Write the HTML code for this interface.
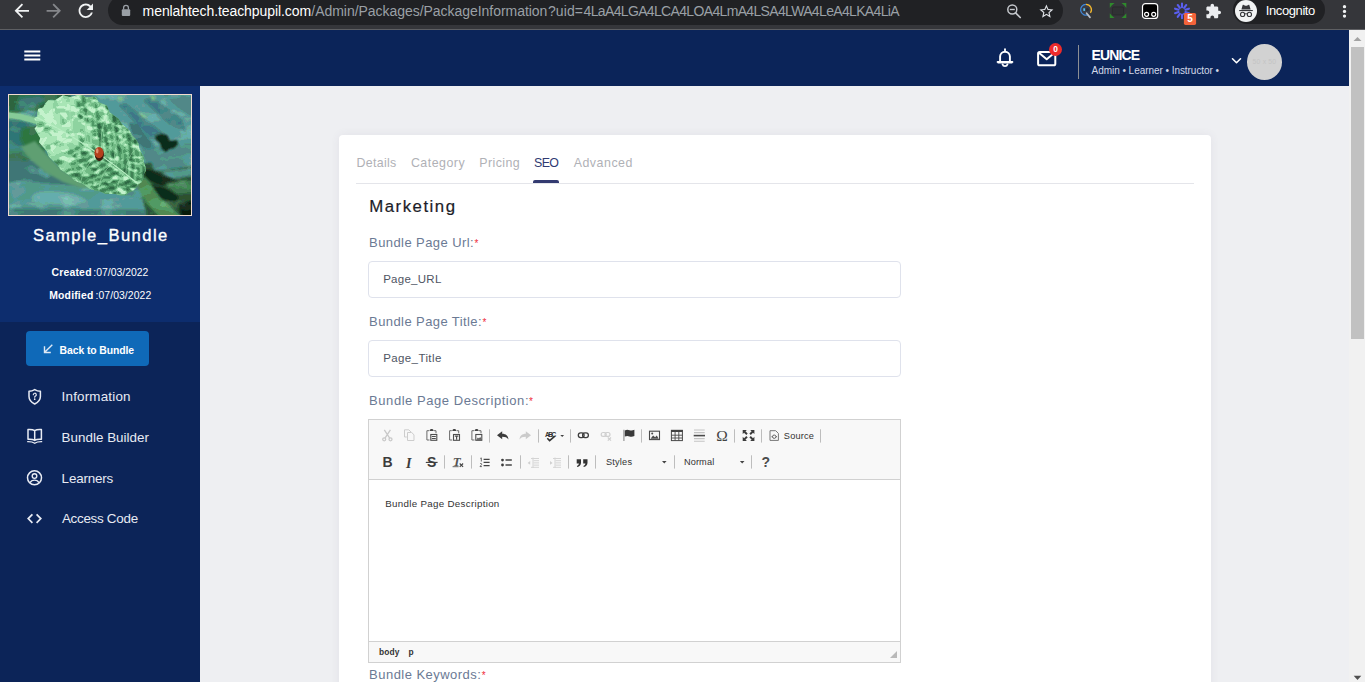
<!DOCTYPE html>
<html lang="en">
<head>
<meta charset="utf-8">
<title>Package Information - Sample_Bundle</title>
<style>
*{box-sizing:border-box;margin:0;padding:0}
html,body{width:1365px;height:682px;overflow:hidden;background:#eeeff2;font-family:"Liberation Sans",sans-serif}
body{position:relative}
.t{position:absolute;white-space:pre}
.a{position:absolute}
svg{position:absolute;overflow:visible}
#chrome{position:absolute;left:0;top:0;width:1365px;height:30px;background:#35363a;border-bottom:1px solid #5e5f62}
#pill{position:absolute;left:108px;top:-4px;width:955px;height:29px;border-radius:14.5px;background:#202124}
#incog{position:absolute;left:1233px;top:-4px;width:92px;height:28px;border-radius:14px;background:#202124}
#apphead{position:absolute;left:0;top:30px;width:1349px;height:56px;background:#0b2459}
#side{position:absolute;left:0;top:86px;width:200px;height:596px;background:#0c2458}
#sidetop{position:absolute;left:0;top:0;width:200px;height:236px;background:#0d2d6e}
#sbar{position:absolute;left:1349px;top:30px;width:16px;height:652px;background:#f1f1f1}
#sthumb{position:absolute;left:2px;top:17px;width:13px;height:292px;background:#c1c1c1}
#card{position:absolute;left:339.2px;top:134.6px;width:871.4px;height:560px;background:#fff;border-radius:4px;box-shadow:0 0 10px rgba(82,63,105,.075)}
.inp{position:absolute;left:368px;width:533px;height:37px;border:1px solid #dfe2ec;border-radius:4px;background:#fff}
#btn{position:absolute;left:26px;top:331px;width:123px;height:35px;border-radius:4px;background:#0f69b8}
#ed{position:absolute;left:368px;top:419px;width:533px;height:244px;border:1px solid #d1d1d1;background:#fff}
#edtop{position:absolute;left:0;top:0;width:531px;height:60px;background:#f8f8f8;border-bottom:1px solid #d1d1d1}
#edbot{position:absolute;left:0;top:221px;width:531px;height:21px;background:#f8f8f8;border-top:1px solid #d1d1d1}
.sep{position:absolute;width:1px;height:13px;background:#bcbcbc}
</style>
</head>
<body>

<!-- ===== browser chrome ===== -->
<div id="chrome">
  <div id="pill"></div>
  <div id="incog"></div>
  <!-- back / forward / reload -->
  <svg style="left:11.2px;top:0.2px" width="21.6" height="21.6" viewBox="0 0 24 24"><path fill="#f1f3f4" d="M20 11H7.83l5.59-5.59L12 4l-8 8 8 8 1.41-1.41L7.83 13H20v-2z"/></svg>
  <svg style="left:43.2px;top:0.2px" width="21.6" height="21.6" viewBox="0 0 24 24"><path fill="#85878b" d="M4 11h12.17l-5.59-5.59L12 4l8 8-8 8-1.41-1.41L16.17 13H4v-2z"/></svg>
  <svg style="left:75.3px;top:0.2px" width="21.6" height="21.6" viewBox="0 0 24 24"><path fill="#f1f3f4" d="M17.65 6.35C16.2 4.9 14.21 4 12 4c-4.42 0-7.99 3.58-7.99 8s3.57 8 7.99 8c3.73 0 6.84-2.55 7.73-6h-2.08c-.82 2.33-3.04 4-5.65 4-3.31 0-6-2.69-6-6s2.69-6 6-6c1.66 0 3.14.69 4.22 1.78L13 11h7V4l-2.35 2.35z"/></svg>
  <!-- lock -->
  <svg style="left:120px;top:3px" width="12" height="14" viewBox="0 0 12 14"><rect x="1.8" y="6.2" width="8.4" height="6.8" rx="1" fill="#9aa0a6"/><path d="M3.6 6.6V4.7a2.4 2.4 0 0 1 4.8 0v1.9" fill="none" stroke="#9aa0a6" stroke-width="1.3"/></svg>
  <!-- zoom-out magnifier -->
  <svg style="left:1004px;top:1px" width="20" height="20" viewBox="0 0 20 20"><circle cx="8.3" cy="8.5" r="4.5" fill="none" stroke="#c4c7cc" stroke-width="1.5"/><path d="M11.6 11.9l4.6 4.6" stroke="#c4c7cc" stroke-width="1.7" stroke-linecap="round"/><path d="M5.8 8.5h5" stroke="#c4c7cc" stroke-width="1.4"/></svg>
  <!-- star -->
  <svg style="left:1037.6px;top:2.8px" width="16.8" height="16.8" viewBox="0 0 24 24"><path fill="#dee1e6" d="M22 9.24l-7.19-.62L12 2 9.19 8.63 2 9.24l5.46 4.73L5.82 21 12 17.27 18.18 21l-1.63-7.03L22 9.24zM12 15.4l-3.76 2.27 1-4.28-3.32-2.88 4.38-.38L12 6.1l1.71 4.04 4.38.38-3.32 2.88 1 4.28L12 15.4z"/></svg>
  <!-- extension 1 : gauge -->
  <svg style="left:1078px;top:2px" width="18" height="18" viewBox="0 0 18 18"><circle cx="8.0" cy="7.7" r="4.7" fill="#3a3d46"/><path d="M8.00 2.30A5.4 5.4 0 1 0 10.28 12.59" fill="none" stroke="#3f86d8" stroke-width="1.3"/><path d="M8.00 2.30A5.4 5.4 0 0 1 12.42 10.80" fill="none" stroke="#f3b72f" stroke-width="1.3"/><path d="M8.600 11.200l3.400 4.200" stroke="#b9bec7" stroke-width="1.700" stroke-linecap="round"/><path d="M5.300 6.300h1.800v2.600h-1.800z" fill="#57c1f2"/><circle cx="9.300" cy="7.600" r="1.500" fill="#2b2d34"/></svg>
  <!-- extension 2 : green capture brackets -->
  <svg style="left:1109px;top:2px" width="18" height="18" viewBox="0 0 18 18"><g fill="#2f8a2c"><path d="M0.800 1.100h4.800l-2.400 1.900-0.500 .5-1.900 2.400z"/><path d="M17.300 1.100v4.800l-1.900-2.400-.5-.5-2.400-1.900z"/><path d="M17.300 16v-4.800l-1.900 2.400-.5 .5-2.400 1.900z"/><path d="M0.800 16h4.800l-2.400-1.900-.5-.5-1.900-2.400z"/></g><rect x="3.400" y="4.900" width="11.200" height="8" rx="1.200" fill="#303134" stroke="#2a2b2d" stroke-width="1"/></svg>
  <!-- extension 3 : black box with eyes -->
  <svg style="left:1141px;top:2px" width="18" height="18" viewBox="0 0 18 18"><rect x="1.500" y="1.600" width="15.200" height="14.800" rx="3" fill="#000" stroke="#fff" stroke-width="1.200"/><circle cx="5.600" cy="12.300" r="2" fill="none" stroke="#fff" stroke-width="1.200"/><circle cx="12.700" cy="12.300" r="2" fill="none" stroke="#fff" stroke-width="1.200"/></svg>
  <!-- extension 4 : sunburst + badge -->
  <svg style="left:1172px;top:1px" width="26" height="26" viewBox="0 0 26 26"><path d="M10.00 6.30L10.00 2.60M12.12 6.99L14.29 3.99M13.42 8.79L16.94 7.64M13.42 11.01L16.94 12.16M12.12 12.81L14.29 15.81M10.00 13.50L10.00 17.20M7.88 12.81L5.71 15.81M6.58 11.01L3.06 12.16M6.58 8.79L3.06 7.64M7.88 6.99L5.71 3.99" stroke="#5a5ff0" stroke-width="2.100" stroke-linecap="round" fill="none"/><rect x="11.900" y="11.900" width="12.200" height="12" rx="1.600" fill="#f4633a"/></svg>
  <div class="t" style="left:1187.3px;top:13px;font:bold 10px/12px 'Liberation Sans',sans-serif;color:#fff">5</div>
  <!-- puzzle -->
  <svg style="left:1205.4px;top:3.4px" width="16.7" height="16.7" viewBox="0 0 24 24"><path fill="#eceef1" d="M20.5 11H19V7c0-1.1-.9-2-2-2h-4V3.5C13 2.12 11.88 1 10.5 1S8 2.12 8 3.5V5H4c-1.1 0-1.99.9-1.99 2v3.8H3.5c1.49 0 2.7 1.21 2.7 2.7s-1.21 2.7-2.7 2.7H2V20c0 1.1.9 2 2 2h3.8v-1.5c0-1.49 1.21-2.7 2.7-2.7 1.49 0 2.7 1.21 2.7 2.7V22H17c1.1 0 2-.9 2-2v-4h1.5c1.38 0 2.5-1.12 2.5-2.5S21.88 11 20.5 11z"/></svg>
  <!-- incognito avatar -->
  <svg style="left:1235px;top:0px" width="22" height="22" viewBox="0 0 22 22"><circle cx="11" cy="11" r="11" fill="#f1f3f4"/><path d="M7.6 5.3c.2-.5.6-.6 1-.4l1.2.5c.8.3 1.600.3 2.400 0l1.200-.5c.4-.2.800-.1 1 .4l1.200 4.100H6.400z" fill="#35363a"/><rect x="4.200" y="10" width="13.600" height="1.100" fill="#35363a"/><circle cx="7.600" cy="14.400" r="2.100" fill="none" stroke="#35363a" stroke-width="1.100"/><circle cx="14.400" cy="14.400" r="2.100" fill="none" stroke="#35363a" stroke-width="1.100"/><path d="M9.700 14.100c.8-.5 1.800-.5 2.600 0" fill="none" stroke="#35363a" stroke-width="1"/></svg>
  <!-- menu dots -->
  <svg style="left:1340px;top:3px" width="9" height="18" viewBox="0 0 9 18"><circle cx="4.500" cy="3.700" r="1.650" fill="#f1f3f4"/><circle cx="4.500" cy="8.400" r="1.650" fill="#f1f3f4"/><circle cx="4.500" cy="13.100" r="1.650" fill="#f1f3f4"/></svg>
</div>

<!-- ===== app header ===== -->
<div id="apphead"></div>
<!-- hamburger -->
<svg style="left:24px;top:49px" width="17" height="13" viewBox="0 0 17 13"><path d="M0.300 2.500h16M0.300 6.500h16M0.300 10.500h16" stroke="#fff" stroke-width="2"/></svg>
<!-- bell -->
<svg style="left:995px;top:47px" width="20" height="22" viewBox="0 0 20 22"><path d="M10 2.200v1.400M5.100 14.300V9.600a4.900 4.900 0 0 1 9.800 0v4.700M2.600 14.900h14.800M3.200 15.600h13.600" fill="none" stroke="#fff" stroke-width="1.900" stroke-linecap="round" stroke-linejoin="round"/><path d="M7.500 17.300a2.600 2.600 0 0 0 5 0" fill="none" stroke="#fff" stroke-width="1.800" stroke-linecap="round"/></svg>
<!-- envelope -->
<svg style="left:1036px;top:50px" width="22" height="18" viewBox="0 0 22 18"><rect x="2.100" y="2" width="17.200" height="13.300" rx="1.600" fill="none" stroke="#fff" stroke-width="2"/><path d="M2.600 2.600l8.100 6.700 8.100-6.700" fill="none" stroke="#fff" stroke-width="2" stroke-linejoin="round"/></svg>
<div class="a" style="left:1049px;top:43px;width:13px;height:13px;border-radius:50%;background:#ee2b2b"></div>
<!-- divider -->
<div class="a" style="left:1078px;top:45px;width:1px;height:34px;background:#8d8f94"></div>
<!-- chevron -->
<svg style="left:1231px;top:57px" width="11" height="8" viewBox="0 0 11 8"><path d="M1.500 1.800l4 3.900 4-3.900" fill="none" stroke="#fff" stroke-width="1.600" stroke-linecap="round" stroke-linejoin="round"/></svg>
<!-- avatar -->
<div class="a" style="left:1246.700px;top:43.700px;width:35.800px;height:36.200px;border-radius:50%;background:#d2d2d2"></div>
<!-- page scrollbar -->
<div id="sbar"><div id="sthumb"></div>
<svg style="left:3px;top:6px" width="10" height="6" viewBox="0 0 10 6"><path d="M1.500 5L5.500 1l4 4z" fill="#a3a3a3"/></svg>
<svg style="left:3px;top:645px" width="10" height="6" viewBox="0 0 10 6"><path d="M1.700 0.800h7.600L5.500 5z" fill="#505050"/></svg>
</div>

<!-- ===== sidebar ===== -->
<div id="side"><div id="sidetop"></div></div>
<!-- bundle picture (leaf with ladybird) -->
<svg style="left:8px;top:94px" width="184" height="122" viewBox="8 94 184 122">
  <defs>
    <clipPath id="pic"><rect x="9" y="95" width="182" height="120"/></clipPath>
    <filter id="b1" x="-10%" y="-10%" width="120%" height="120%"><feGaussianBlur stdDeviation="1.1"/></filter>
    <filter id="bgpost" x="0" y="0" width="100%" height="100%" color-interpolation-filters="sRGB">
      <feGaussianBlur in="SourceGraphic" stdDeviation="1.3" result="src"/>
      <feTurbulence type="fractalNoise" baseFrequency="0.05 0.09" numOctaves="3" seed="4" result="n"/>
      <feColorMatrix in="n" type="matrix" values="0.30 0 0 0 -0.15  0.30 0 0 0 -0.15  0.30 0 0 0 -0.15  0 0 0 0 1" result="ng"/>
      <feComposite in="src" in2="ng" operator="arithmetic" k1="0" k2="1" k3="1" k4="0" result="sum"/>
      <feComponentTransfer in="sum">
        <feFuncR type="discrete" tableValues="0.036 0.107 0.179 0.250 0.321 0.393 0.464 0.536 0.607 0.679 0.750 0.821 0.893 0.964"/>
        <feFuncG type="discrete" tableValues="0.036 0.107 0.179 0.250 0.321 0.393 0.464 0.536 0.607 0.679 0.750 0.821 0.893 0.964"/>
        <feFuncB type="discrete" tableValues="0.036 0.107 0.179 0.250 0.321 0.393 0.464 0.536 0.607 0.679 0.750 0.821 0.893 0.964"/>
      </feComponentTransfer>
    </filter>
    <filter id="b2" x="-10%" y="-10%" width="120%" height="120%"><feGaussianBlur stdDeviation="0.55"/></filter>
    <filter id="post" x="0" y="0" width="100%" height="100%" color-interpolation-filters="sRGB">
      <feGaussianBlur in="SourceGraphic" stdDeviation="0.95" result="src"/>
      <feTurbulence type="fractalNoise" baseFrequency="0.11 0.16" numOctaves="2" seed="11" result="n"/>
      <feColorMatrix in="n" type="matrix" values="2.1 0 0 0 -1.05  2.1 0 0 0 -1.05  2.1 0 0 0 -1.05  0 0 0 0 1" result="ng"/>
      <feComposite in="src" in2="ng" operator="arithmetic" k1="0" k2="1" k3="1" k4="-0.10" result="sum"/>
      <feComponentTransfer in="sum" result="pz">
        <feFuncR type="discrete" tableValues="0.18 0.25 0.31 0.44 0.56 0.66 0.77"/>
        <feFuncG type="discrete" tableValues="0.42 0.51 0.60 0.73 0.83 0.90 0.95"/>
        <feFuncB type="discrete" tableValues="0.27 0.33 0.40 0.52 0.63 0.71 0.80"/>
      </feComponentTransfer>
      <feComposite in="pz" in2="SourceAlpha" operator="in"/>
    </filter>
    <clipPath id="leafclip"><path d="M37.3 113.5L38.1 109.0L43.2 107.6L45.2 103.7L48.2 100.2L54.8 100.5L58.9 97.8L63.0 95.3L69.7 97.3L74.7 95.9L80.1 94.0L86.4 97.4L92.3 96.8L95.8 96.9L98.7 102.2L102.2 103.7L106.9 105.6L109.5 112.2L114.0 115.5L118.5 118.8L121.4 123.5L125.7 127.3L129.8 130.9L131.9 135.2L135.6 139.1L138.4 143.6L139.1 148.1L141.5 152.8L143.7 157.6L143.7 161.8L145.4 166.6L145.6 170.9L143.8 174.2L143.4 178.4L141.5 182.2L138.0 184.6L135.6 188.2L132.9 191.1L128.8 192.5L125.7 195.1L121.0 195.5L115.2 194.1L110.0 194.1L105.1 193.7L99.6 191.2L94.3 190.2L89.1 188.5L84.0 184.6L78.6 182.3L73.7 179.9L69.7 175.5L64.8 172.5L60.2 169.2L57.3 164.5L53.0 160.7L48.9 156.4L46.9 151.5L43.2 146.9L39.1 142.3L40.2 138.0L37.3 133.2L34.6 128.7L36.9 125.7L35.4 121.4L34.0 117.9L37.4 116.6z"/></clipPath>
  </defs>
  <rect x="8" y="94" width="184" height="122" fill="#f2dccf"/>
  <g clip-path="url(#pic)">
    <g filter="url(#bgpost)">
      <rect x="4" y="90" width="192" height="130" fill="#4a8e8a"/>
      <!-- upper-left dark green / teal -->
      <path d="M4 90h70l-8 14-18 10-20-4-24 6z" fill="#316d48"/>
      <path d="M20 97l20-2 6 5-14 8-16 2z" fill="#37796f"/>
      <path d="M4 117l28 6 8 20 10 18 20 20-66 6z" fill="#347872"/>
      <path d="M22 128l16-3 10 22-8 8-14-4-6-12z" fill="#336e47"/>
      <path d="M4 150l40 2 10 12-50 2z" fill="#3b7b5a"/>
      <path d="M22 158l8 0 4 20-8 2-6-12z" fill="#336e47"/>
      <!-- upper-right teal with streaks -->
      <path d="M90 90h106v80h-50z" fill="#5a9e9a"/>
      <path d="M118 105l8-2 40 32-4 8-14-6z" fill="#427f80"/>
      <path d="M142 100l10-3 30 22 4 12-14-4z" fill="#427f80"/>
      <path d="M160 92l34 2v24l-16-10z" fill="#4a8a88"/>
      <path d="M128 122l8 2 26 30-8 6-20-20z" fill="#3f7b7a"/>
      <path d="M140 150l52-8v20l-44 6z" fill="#4b908b"/>
      <path d="M117 98l4-2 3 3-4 3zM150 96l4-1 2 5-4 1zM138 112l6 2 4 5-6-2z" fill="#7fbf8c"/>
      <!-- dark bird-shaped blob -->
      <path d="M155 136l6-2 6 1 3 6 7-1 1 4-4 4-5 1-3 3-4-3-2-6-4-3z" fill="#0c2613"/>
      <!-- lower-left teal bands -->
      <path d="M4 160l40 0 30 14 40 22 30 8v16h-140z" fill="#387570"/>
      <path d="M4 184l20-4 30 4 40 2 40 12 20 2v18h-150z" fill="#52958f"/>
      <path d="M32 196c6-7 20-5 30-4 12 1 24 6 26 10s-14 5-26 3-34 1-30-9z" fill="#6dada5"/>
      <path d="M10 190l14-4 2 6-12 8zM10 204l10-2 2 6-12 2zM76 204l10-2 4 6-8 4z" fill="#5f9f99"/>
      <path d="M40 166l10 4 -2 8-10-4z" fill="#4b8e89"/>
      <path d="M100 192l30 4 16 6 6 14-60-2 -6-12z" fill="#5b9c96"/>
      <path d="M4 208l150 2v10h-150z" fill="#3d7d76"/>
      <!-- lower-right dark foliage -->
      <path d="M143 164l51-8v64h-46l-8-32z" fill="#2a5636"/>
      <path d="M150 158l44-6v14l-40 6z" fill="#4a8e88"/>
      <path d="M162 172l30-4v8l-24 4z" fill="#4f938c"/>
      <path d="M145 169l12 2 18 9 10 2-2 5-24-2-14-7z" fill="#0d2715"/>
      <path d="M149 184l16 4 14 9-4 5-16-4-10-9z" fill="#0d2715"/>
      <path d="M165 184l20-4 8 2v10l-16 2z" fill="#3f7f52"/>
      <path d="M178 204l16-4v20h-12z" fill="#0b2212"/>
      <path d="M156 200l6 0 0 5-6 0z" fill="#12301b"/>
      <!-- stem (lower right) -->
      <path d="M134 181l12-4 14 20 26 24h-22l-18-18z" fill="#4a9059"/>
      <!-- stem (upper left) -->
      <path d="M4 112l16 1 22 6-2 6-20-5-16-2z" fill="#7cc08e"/>
    </g>
    <!-- leaf underside in shadow -->
    <path d="M21 147l14-6 12 14 14 14 18 12 16 7-14 0-18-6-18-10-14-12z" fill="#5f9f72" filter="url(#b1)"/>
    <!-- leaf body -->
    <g filter="url(#b2)">
      <!-- tip stem crisp -->
      <path d="M8 112.500l12 1.500 20 5.500-1 5-20-5.500-11-1.500z" fill="#86cb98"/>
      <path d="M37.3 113.5L38.1 109.0L43.2 107.6L45.2 103.7L48.2 100.2L54.8 100.5L58.9 97.8L63.0 95.3L69.7 97.3L74.7 95.9L80.1 94.0L86.4 97.4L92.3 96.8L95.8 96.9L98.7 102.2L102.2 103.7L106.9 105.6L109.5 112.2L114.0 115.5L118.5 118.8L121.4 123.5L125.7 127.3L129.8 130.9L131.9 135.2L135.6 139.1L138.4 143.6L139.1 148.1L141.5 152.8L143.7 157.6L143.7 161.8L145.4 166.6L145.6 170.9L143.8 174.2L143.4 178.4L141.5 182.2L138.0 184.6L135.6 188.2L132.9 191.1L128.8 192.5L125.7 195.1L121.0 195.5L115.2 194.1L110.0 194.1L105.1 193.7L99.6 191.2L94.3 190.2L89.1 188.5L84.0 184.6L78.6 182.3L73.7 179.9L69.7 175.5L64.8 172.5L60.2 169.2L57.3 164.5L53.0 160.7L48.9 156.4L46.9 151.5L43.2 146.9L39.1 142.3L40.2 138.0L37.3 133.2L34.6 128.7L36.9 125.7L35.4 121.4L34.0 117.9L37.4 116.6z" fill="#7ec592"/>
      <g clip-path="url(#leafclip)" filter="url(#post)">
        <rect x="20" y="90" width="140" height="120" fill="#cfcfcf"/>
        <path fill="#f2f2f2" d="M41.5 119.5L47.0 122.6L47.3 115.7L41.5 112.7zM48.9 124.2L53.3 126.7L53.8 120.3L49.5 117.4zM49.3 115.4L54.2 118.6L53.3 110.9L47.7 107.3zM47.9 107.1L52.2 109.6L52.3 102.1L47.9 98.8zM44.7 77.2L49.8 81.3L47.9 71.8L42.5 68.3zM54.6 127.6L58.7 131.3L60.0 125.0L55.0 120.9zM50.0 81.5L55.1 85.1L54.2 75.5L49.8 71.8zM62.1 80.0L66.9 82.0L63.9 73.0L60.0 70.2zM52.8 137.0L56.7 141.1L49.1 143.9L44.3 140.4zM57.0 148.9L60.8 151.9L53.7 153.6L48.0 150.6z"/>
<path fill="#dbdbdb" d="M42.2 111.1L47.3 114.0L46.9 107.6L42.2 103.7zM35.5 63.1L41.6 66.8L39.1 57.1L34.5 54.7zM55.7 119.7L59.7 122.2L58.6 114.7L54.0 112.4zM59.9 132.3L65.9 135.1L66.7 128.1L61.3 124.3zM59.7 105.9L64.4 109.0L64.0 99.4L58.1 96.3zM58.0 95.5L63.8 97.8L62.3 90.7L57.3 87.3zM56.1 84.8L61.7 89.4L60.6 80.1L55.7 76.1zM67.7 127.9L72.3 131.2L72.6 123.6L67.6 120.8zM66.4 110.0L70.2 112.9L70.0 103.4L65.5 101.6zM73.8 141.0L78.8 143.8L78.5 136.5L73.6 133.0zM71.7 102.8L74.9 106.9L75.2 98.2L69.0 94.9zM69.2 93.7L74.8 96.7L72.6 88.5L68.6 84.7zM75.4 98.2L80.4 101.8L79.3 92.4L74.5 88.2zM74.1 88.1L78.1 90.1L76.2 81.8L71.3 79.5zM86.2 130.4L91.2 134.0L88.9 126.3L84.3 123.0zM25.6 127.2L30.4 131.9L22.4 133.0L17.7 130.7zM21.7 134.7L26.5 137.4L18.4 140.2L13.9 137.0zM12.4 137.1L17.5 140.1L8.5 143.4L3.5 140.6zM-7.9 142.4L-2.1 145.4L-11.7 147.9L-15.6 145.0zM46.8 132.3L50.7 136.6L44.2 138.4L37.8 134.9zM38.3 135.4L42.5 138.6L33.8 142.5L29.7 139.5zM9.5 143.7L14.4 146.9L4.5 149.9L0.9 146.9zM60.4 133.5L64.8 136.2L58.5 140.7L54.1 136.8zM44.5 140.8L48.7 143.1L39.9 146.9L36.2 143.4zM16.0 149.0L20.4 151.1L12.2 154.1L7.1 151.1zM65.8 137.0L71.7 141.1L64.5 143.2L60.3 141.3zM22.3 152.1L27.4 155.4L17.0 156.8L12.7 154.8zM12.3 155.0L17.3 158.3L7.0 159.6L2.3 155.9zM65.6 145.9L68.9 149.1L62.6 151.6L58.3 147.3zM36.9 154.3L42.3 157.7L34.6 160.3L29.9 156.0zM27.8 156.3L33.4 159.7L24.3 161.2L18.7 157.8zM44.4 158.6L48.2 160.6L39.6 163.8L35.4 160.0zM45.9 169.1L52.3 172.0L42.9 174.8L38.7 171.1z"/>
<path fill="#c9c9c9" d="M41.7 103.2L45.9 106.2L45.5 96.6L40.4 93.7zM48.0 97.3L51.8 99.7L50.2 91.0L46.3 87.6zM53.4 101.8L58.0 103.8L57.2 95.8L52.5 92.8zM73.0 122.6L78.1 126.9L76.8 117.2L72.3 114.2zM84.8 149.0L90.0 151.7L90.9 143.9L86.9 142.2zM15.3 130.1L20.4 134.2L12.6 137.0L7.1 133.1zM-3.9 136.3L1.6 139.6L-7.3 141.9L-11.9 137.6zM-13.4 138.4L-8.5 142.2L-16.9 143.0L-22.8 140.4zM39.6 129.1L43.9 131.3L37.7 135.8L32.9 130.9zM30.4 132.5L36.3 135.0L28.8 137.6L23.3 134.6zM28.7 139.2L34.1 142.6L24.4 145.1L20.2 140.6zM35.0 142.3L38.9 147.0L31.4 149.6L25.9 145.3zM25.7 145.5L29.1 148.6L21.4 151.4L17.2 148.7zM40.8 146.5L45.4 149.7L37.1 153.0L31.9 149.1zM72.4 141.4L76.9 145.6L71.7 147.6L65.1 144.4zM46.9 151.3L52.5 155.4L44.5 156.9L39.6 154.3zM53.9 156.3L57.9 158.5L49.2 160.9L44.7 157.3zM34.5 160.9L38.5 163.5L29.5 166.3L25.5 163.3zM50.3 162.4L55.4 164.8L47.2 168.1L40.9 163.8zM65.0 164.0L70.3 167.3L62.1 169.4L58.4 166.3zM35.9 171.3L42.2 174.6L32.8 176.6L27.3 173.5z"/>
<path fill="#b5b5b5" d="M40.2 92.9L45.2 95.3L45.0 87.7L40.0 84.3zM39.5 83.8L44.2 85.8L42.5 78.1L37.5 74.1zM41.7 66.4L46.8 69.8L45.3 60.7L39.8 57.6zM53.8 111.4L59.0 114.1L59.2 106.0L53.2 102.5zM52.6 91.9L57.4 94.0L55.6 85.6L49.9 81.8zM60.8 114.9L65.4 118.7L64.1 109.7L58.9 106.9zM55.4 75.5L59.5 78.6L58.2 70.2L52.5 66.6zM67.6 118.3L71.6 121.9L70.7 113.4L66.4 110.4zM64.4 99.5L70.4 103.3L67.5 94.0L63.3 90.6zM62.3 89.4L67.6 92.7L66.7 83.8L61.5 80.5zM73.0 132.8L78.0 134.5L77.3 126.9L73.4 123.6zM71.7 112.8L77.8 116.8L76.0 107.6L70.9 105.2zM67.9 83.0L73.2 87.7L71.2 77.1L66.0 75.4zM79.2 127.0L84.2 129.7L83.4 121.1L78.1 118.0zM34.2 124.5L38.8 127.6L31.0 131.0L25.4 128.3zM7.1 134.0L10.7 137.4L3.0 139.4L-1.8 136.4zM54.1 129.1L59.2 131.7L51.5 134.9L47.7 133.3zM19.1 141.6L22.9 145.2L16.2 147.8L9.9 143.2zM18.6 158.8L22.2 161.9L13.5 163.2L9.2 160.4zM63.2 151.9L67.8 155.5L60.3 157.5L55.1 154.9z"/>
<path fill="#7f7f7f" d="M38.4 72.7L43.8 75.6L41.2 68.0L35.8 64.3zM45.4 86.3L50.6 90.1L49.5 82.6L44.8 78.6zM48.2 70.7L53.8 75.2L52.5 65.6L47.3 62.9zM41.8 120.9L46.7 123.7L39.9 127.8L35.6 124.6zM48.2 125.0L52.6 128.6L46.4 131.4L40.8 129.2zM2.7 140.2L7.6 143.4L-1.1 144.6L-6.6 142.7zM-1.2 146.6L4.0 150.0L-4.1 152.4L-10.5 147.6zM5.5 150.6L10.1 154.4L1.9 156.6L-3.8 151.8zM49.7 144.5L54.7 147.7L46.3 149.3L43.0 146.7zM43.6 175.7L47.4 178.3L38.7 180.5L34.3 177.5z"/>
<path fill="#a0a0a0" d="M60.9 123.7L66.8 127.5L65.0 118.4L60.1 116.6zM66.0 135.9L71.7 139.0L72.9 131.6L67.0 130.0zM69.4 157.6L73.6 160.0L65.8 162.6L60.0 160.1z"/>
<path fill="#606060" d="M78.6 145.4L84.9 148.3L84.3 140.1L79.5 137.3zM80.4 91.4L84.6 95.3L83.4 85.8L77.6 82.7zM110.3 165.8L116.1 169.5L115.9 160.5L110.4 157.2zM109.6 138.6L113.8 140.8L112.6 133.0L108.3 129.3zM107.9 128.7L112.9 131.1L111.0 123.4L107.8 119.9zM116.1 169.0L122.2 172.3L121.5 164.5L117.5 161.8zM122.9 155.4L128.9 159.4L127.0 150.0L122.8 148.3zM122.8 147.2L126.8 149.0L126.3 140.5L120.2 138.6zM126.1 130.8L129.6 134.0L128.6 126.0L123.3 122.6zM136.2 163.7L141.0 166.5L140.3 159.9L134.7 155.8zM134.2 154.6L140.2 158.2L138.2 149.1L133.3 145.4zM141.2 158.1L145.7 161.9L145.0 153.7L139.7 150.4zM137.5 139.9L142.5 142.5L140.7 134.1L137.3 131.0zM148.4 182.2L154.2 185.6L153.7 176.8L148.2 173.6zM148.0 172.7L153.1 175.2L151.7 167.5L146.6 164.8zM146.5 163.0L151.5 166.9L151.3 156.7L145.4 154.6zM142.5 132.4L147.9 136.5L145.3 127.1L140.3 123.9zM153.6 167.7L158.3 170.3L156.6 162.2L153.1 157.9zM166.5 202.3L171.7 205.9L172.1 198.6L168.2 194.5zM167.2 193.9L173.1 196.2L171.9 188.5L167.5 186.7zM78.8 145.3L84.5 148.1L77.9 151.4L72.9 149.3zM71.7 148.8L76.5 153.5L68.4 155.0L63.2 151.8zM40.9 164.1L44.6 168.7L36.7 169.5L31.2 167.1zM63.3 171.3L68.4 173.3L59.3 176.2L54.6 172.6zM96.8 202.6L101.3 204.6L92.8 206.7L87.5 204.7zM86.2 204.8L91.8 206.8L83.0 209.7L77.4 206.0zM148.0 191.6L152.6 194.8L146.2 198.0L140.3 194.3zM140.1 195.6L144.8 197.9L137.6 200.8L133.3 197.0zM102.7 205.7L107.5 209.4L98.3 211.9L93.8 207.7zM133.9 208.5L140.3 212.4L130.9 214.3L126.4 212.2zM125.8 211.4L129.5 215.6L121.7 217.6L116.9 213.4zM115.3 213.6L120.5 218.1L111.9 218.9L107.2 217.1zM104.7 217.1L110.5 220.1L100.6 221.2L96.9 217.6zM165.9 202.9L171.7 206.7L164.4 210.2L159.4 205.8zM121.2 218.4L125.8 222.1L118.7 222.9L113.2 220.2z"/>
<path fill="#8c8c8c" d="M78.9 136.0L84.4 140.3L84.0 130.6L80.1 127.7zM85.3 140.8L90.5 142.8L90.2 136.0L85.2 132.8zM91.4 144.9L97.8 147.0L97.6 140.1L92.7 136.1zM89.4 116.7L94.6 118.7L92.4 111.3L88.1 107.6zM88.0 106.8L93.0 108.7L91.2 100.1L86.0 97.7zM99.7 114.5L106.2 116.7L103.0 108.9L98.8 105.9zM107.4 117.7L112.1 121.6L110.6 113.4L106.0 110.2zM58.7 140.8L64.1 144.1L56.0 146.7L50.6 143.3zM31.4 150.1L35.8 153.7L27.7 156.1L23.4 152.7zM24.7 162.7L29.7 166.9L20.2 167.3L16.1 164.9zM29.8 167.7L36.1 170.1L26.3 172.9L21.6 168.8zM53.4 173.2L57.8 177.1L49.2 178.1L44.7 175.7zM88.2 168.8L92.4 172.0L84.7 174.7L80.2 172.1zM74.6 178.4L79.3 182.7L71.7 183.9L66.6 180.7zM65.6 182.1L70.2 184.7L61.2 185.7L57.5 183.9zM55.1 183.8L61.1 186.8L52.3 188.2L46.4 185.9zM87.5 187.5L91.9 190.7L84.2 192.6L80.0 189.3z"/>
<path fill="#282828" d="M78.2 117.1L83.5 120.0L83.0 112.9L76.7 109.7zM103.7 160.9L110.1 163.9L109.3 157.6L104.0 153.9zM111.2 157.3L115.8 160.5L115.3 152.6L110.0 149.2zM104.4 108.9L110.3 112.1L108.6 102.8L102.9 99.1zM117.6 151.3L121.8 155.4L121.4 147.2L115.7 143.1zM114.6 132.0L120.1 135.9L119.0 126.3L113.2 124.4zM122.6 173.2L128.2 177.1L128.0 168.5L123.3 166.5zM129.6 168.5L134.3 172.8L135.1 163.6L129.6 161.6zM126.9 139.9L131.7 143.7L131.2 135.3L126.1 131.2zM123.2 121.5L128.6 124.7L127.6 114.4L122.5 112.6zM133.3 144.2L138.7 147.2L137.5 138.9L132.3 137.0zM141.7 186.6L146.2 188.3L147.8 182.1L142.3 177.8zM143.6 142.6L148.5 145.5L148.3 138.1L143.0 134.9zM160.3 180.0L166.4 184.2L164.0 176.3L159.1 172.1zM84.6 149.9L90.9 152.1L83.7 156.5L79.1 152.9zM89.3 162.6L94.5 164.7L86.9 168.5L81.9 163.8zM95.8 166.5L101.6 169.9L93.0 171.8L89.4 167.8zM78.1 172.2L83.0 176.0L75.3 177.6L69.4 174.1zM59.7 176.5L63.7 181.2L56.0 182.4L49.8 179.9zM49.9 179.3L53.4 182.3L45.2 184.6L39.8 180.8zM109.4 166.3L115.2 169.8L108.7 171.9L102.6 170.0zM94.7 173.4L98.5 175.8L90.1 179.4L85.1 175.0zM72.4 185.5L76.3 188.1L68.1 190.1L63.7 186.7zM114.5 178.8L119.6 181.2L112.9 184.2L107.6 181.3zM128.7 179.0L134.6 182.0L126.6 185.2L122.0 182.7zM112.5 185.0L118.2 189.4L109.6 190.7L104.0 188.6zM134.5 182.6L140.1 185.5L133.5 188.4L128.4 186.9zM128.3 186.6L131.6 189.7L124.7 192.0L120.0 188.4zM119.0 190.5L123.9 192.5L115.3 194.8L110.0 192.7zM134.4 189.8L137.7 194.6L130.5 197.0L125.9 192.5zM106.1 199.1L112.0 201.7L102.3 205.1L97.9 200.8zM122.0 201.5L127.2 204.7L118.9 207.1L114.6 202.5zM127.6 204.3L133.0 208.1L125.2 210.3L119.9 206.4zM118.4 207.1L124.5 211.0L115.6 213.4L109.8 209.6zM99.4 212.6L103.8 215.2L95.8 218.2L91.1 214.6zM143.9 205.8L148.1 208.6L140.4 211.6L136.3 208.8zM157.9 207.3L164.0 211.2L155.9 213.9L151.8 209.0zM149.2 210.5L155.3 213.2L146.2 215.4L141.5 213.3z"/>
<path fill="#545454" d="M76.9 107.4L82.9 110.3L81.0 102.6L74.9 99.7zM81.7 102.5L87.5 105.1L84.7 95.9L81.0 92.6zM91.7 135.9L96.0 139.2L96.4 130.8L90.7 126.2zM91.7 125.3L95.4 129.0L94.1 120.2L90.6 118.0zM86.5 95.6L91.2 99.0L88.8 89.7L84.0 87.8zM96.7 120.1L100.0 124.1L100.2 114.7L94.5 111.4zM101.6 123.7L107.5 127.1L106.5 118.8L100.2 115.1zM118.2 160.5L121.5 163.4L121.8 156.5L116.9 152.5zM120.7 137.3L125.7 139.2L123.5 131.2L119.8 128.7zM135.8 181.4L140.2 185.3L141.7 177.6L135.7 175.3zM132.2 135.3L136.2 137.7L135.3 129.2L130.0 125.3zM141.4 168.9L145.9 171.5L145.8 162.7L140.3 160.4zM135.8 129.0L141.0 132.6L139.4 122.8L134.8 120.9zM148.1 137.3L154.0 140.5L151.1 131.6L147.1 128.9zM163.9 164.6L170.3 168.8L168.5 160.1L162.6 156.4zM163.9 156.3L168.8 158.6L165.8 150.7L160.7 147.2zM59.0 159.3L64.6 163.7L55.4 166.0L51.8 161.5zM80.5 165.7L86.0 167.4L78.0 170.6L73.8 166.8zM72.6 167.3L76.7 170.8L69.1 173.6L64.5 170.8zM69.7 174.0L73.2 177.7L65.1 180.5L61.2 177.0zM102.2 169.3L106.4 172.4L99.2 176.5L95.0 173.5zM99.8 177.3L104.6 180.4L96.6 182.2L92.6 179.4zM81.6 183.0L85.9 186.1L77.3 188.9L73.3 185.9zM62.3 188.1L67.0 190.1L58.1 192.2L52.0 190.0zM96.9 184.6L101.4 186.9L94.5 190.3L89.3 185.9zM99.6 195.8L104.7 198.2L96.7 200.4L92.3 196.9zM91.0 198.5L96.2 200.8L85.8 202.5L81.6 200.2zM125.1 193.8L130.0 197.1L121.8 199.6L117.3 195.7zM113.2 203.9L116.7 206.2L108.6 208.9L104.2 205.4zM137.9 202.0L141.9 206.1L134.5 207.5L129.7 204.2z"/>
<path fill="#3d3d3d" d="M85.1 121.3L89.7 124.0L87.6 115.9L83.9 113.5zM83.7 111.5L88.2 115.6L87.8 106.5L81.7 102.5zM91.7 152.4L97.6 156.6L97.1 149.2L92.2 145.4zM98.0 156.9L103.5 160.3L103.6 152.5L98.0 149.8zM103.2 133.8L107.4 136.8L107.8 127.9L102.3 125.0zM116.4 141.7L120.3 145.0L119.1 137.6L114.9 133.4zM122.8 164.2L128.5 168.2L127.9 160.8L123.5 156.4zM120.1 127.1L123.6 129.6L122.0 120.5L117.0 117.7zM117.1 117.2L121.6 120.5L120.3 111.1L116.0 106.9zM129.6 178.4L134.5 181.2L134.2 173.5L130.0 169.5zM135.7 173.3L140.7 175.7L140.0 167.9L136.5 165.6zM130.3 123.9L134.0 127.7L132.4 118.9L127.8 116.1zM147.3 189.7L152.6 193.8L154.3 186.3L148.3 183.4zM161.1 197.7L165.4 202.0L166.1 193.4L161.1 191.6zM160.7 190.2L166.6 193.2L166.0 185.8L161.1 181.9zM157.2 151.5L162.0 155.2L160.4 146.1L155.9 142.8zM155.3 141.5L159.8 144.1L158.4 134.9L153.1 132.9zM161.7 145.9L165.5 148.9L165.0 140.2L159.4 137.4zM76.6 153.3L81.8 157.4L75.5 160.1L70.6 156.5zM83.3 157.0L88.8 160.6L81.7 164.0L75.3 159.8zM55.5 166.0L60.5 168.9L52.5 171.2L47.1 169.4zM97.3 157.9L103.1 160.3L95.5 164.0L91.0 162.2zM104.5 162.1L108.6 164.7L101.7 168.0L97.4 165.6zM84.6 176.1L89.4 179.9L81.5 182.0L76.5 177.8zM108.8 173.5L113.6 177.2L105.9 179.4L100.5 177.5zM122.3 174.7L126.8 177.8L120.6 181.0L115.6 177.0zM121.5 182.8L126.6 185.8L118.5 187.6L114.0 185.1zM102.9 187.7L108.0 191.5L99.5 193.7L94.5 191.2zM94.3 190.2L99.1 193.7L90.6 196.9L84.8 193.7zM83.9 194.2L89.1 197.3L79.8 199.1L75.7 195.6zM80.6 199.3L85.7 202.7L76.4 206.0L70.9 201.1zM116.1 197.3L120.0 200.2L112.7 201.9L107.8 199.8zM130.6 198.4L135.4 200.7L128.0 202.8L123.5 199.9zM146.2 199.5L151.6 201.2L143.0 205.4L139.0 201.5zM131.9 216.3L136.0 219.5L128.7 221.1L122.6 218.0zM111.9 220.0L116.7 223.3L108.2 225.3L103.1 223.0z"/>
<path fill="#727272" d="M98.2 148.7L104.2 152.2L102.9 143.6L98.3 140.4zM93.7 110.2L99.5 114.2L98.0 104.9L93.2 101.3zM91.6 99.4L97.5 102.5L96.0 95.3L91.0 91.3zM105.7 153.0L110.4 155.9L108.9 147.5L105.3 145.1zM99.5 104.9L104.0 108.3L102.7 98.2L96.4 96.1zM111.4 147.1L115.3 151.5L113.8 142.4L110.4 139.8zM111.4 112.9L116.4 114.8L114.6 107.1L109.2 102.7zM91.1 153.4L95.9 157.0L90.5 161.0L85.5 157.8zM74.9 160.9L79.0 163.4L72.8 167.1L67.9 163.6zM78.3 189.0L82.7 193.0L73.9 193.8L69.8 192.0zM68.6 192.0L73.2 195.9L64.3 196.1L58.8 194.2zM73.5 195.6L78.8 198.6L69.4 200.7L64.8 198.2z"/>
<path fill="#141414" d="M98.1 139.5L102.7 142.9L102.2 134.8L97.9 130.4zM97.0 129.8L102.9 133.7L101.6 123.7L95.2 121.8zM103.8 144.2L109.5 146.0L108.0 138.3L103.3 135.2zM112.2 122.2L117.2 125.2L117.2 117.1L112.3 113.5zM128.7 160.1L134.4 163.4L133.1 154.8L128.7 151.6zM128.4 149.9L132.4 154.5L132.1 145.1L127.5 142.5zM142.2 177.0L146.4 180.9L147.0 172.3L142.2 169.3zM139.3 148.1L145.2 152.6L143.5 142.6L138.9 140.7zM146.3 152.3L150.9 156.0L150.0 148.2L145.2 143.6zM154.8 194.0L159.0 198.3L159.8 190.6L155.1 185.9zM154.9 184.9L159.7 188.0L159.5 181.2L155.1 177.8zM153.5 175.9L159.7 180.5L157.6 171.3L153.6 168.7zM152.1 158.0L157.1 159.7L155.3 151.0L151.6 149.2zM151.3 146.4L154.9 150.0L154.6 141.7L148.8 139.1zM160.1 170.9L164.0 174.5L162.7 165.2L158.4 161.7zM158.7 161.3L163.5 164.4L161.3 156.0L156.9 153.1zM167.5 184.6L171.2 187.8L170.1 180.1L165.9 176.1zM165.4 175.5L170.6 178.8L169.0 170.7L164.6 165.9zM116.2 170.7L120.4 174.2L113.9 176.3L109.5 172.8zM90.5 180.8L95.1 183.3L88.1 186.3L82.0 182.3zM105.7 181.2L111.7 185.0L103.9 186.4L98.7 183.9zM109.4 193.4L114.6 196.5L106.6 197.4L101.8 194.6zM140.9 186.6L145.4 190.2L140.2 193.4L134.1 189.4zM93.6 208.4L97.1 210.6L88.3 214.0L83.5 210.3zM154.5 195.2L158.3 199.1L152.6 201.2L147.1 197.5zM108.9 210.2L114.2 212.6L105.7 216.1L101.2 211.4zM160.6 199.2L165.2 202.1L158.5 205.6L152.7 202.2zM152.4 203.7L157.9 207.1L149.2 208.5L145.6 206.1zM140.8 213.2L145.9 216.5L137.8 218.9L132.4 215.9z"/>
<path d="M37.0 117.5L138.0 184.0" stroke="#f4f4f4" stroke-width="1.4" fill="none"/>
<path d="M47.3 124.3L47.9 114.3L47.2 103.5L45.9 92.3L44.2 80.8L42.2 69.1L39.9 57.2M53.5 128.4L54.1 118.4L53.4 107.6L52.2 96.4L50.5 84.9L48.5 73.2L46.2 61.3M59.8 132.5L60.4 122.5L59.7 111.7L58.4 100.5L56.7 89.0L54.7 77.3L52.4 65.4M66.0 136.6L66.6 126.6L66.0 115.8L64.7 104.6L63.0 93.1L61.0 81.4L58.7 69.5M72.3 140.7L72.9 130.7L72.2 119.9L70.9 108.7L69.2 97.2L67.2 85.5L64.9 73.6M78.6 144.9L79.1 134.9L78.5 124.0L77.2 112.8L75.5 101.3L73.5 89.6L71.2 77.7M84.8 149.0L85.4 139.0L84.7 128.2L83.4 117.0L81.8 105.5L79.7 93.8L77.4 81.9M91.1 153.1L91.6 143.1L91.0 132.3L89.7 121.1L88.0 109.6L86.0 97.9L83.7 86.0M97.3 157.2L97.9 147.2L97.2 136.4L95.9 125.2L94.3 113.7L92.2 102.0L89.9 90.1M103.6 161.3L104.1 151.3L103.5 140.5L102.2 129.3L100.5 117.8L98.5 106.1L96.2 94.2M109.8 165.4L110.4 155.4L109.7 144.6L108.5 133.4L106.8 121.9L104.7 110.2L102.4 98.3M116.1 169.6L116.6 159.6L116.0 148.7L114.7 137.5L113.0 126.0L111.0 114.3L108.7 102.4M122.3 173.7L122.9 163.7L122.2 152.9L121.0 141.7L119.3 130.2L117.2 118.5L114.9 106.6M128.6 177.8L129.1 167.8L128.5 157.0L127.2 145.8L125.5 134.3L123.5 122.6L121.2 110.7M134.8 181.9L135.4 171.9L134.7 161.1L133.5 149.9L131.8 138.4L129.7 126.7L127.4 114.8M141.1 186.0L141.7 176.0L141.0 165.2L139.7 154.0L138.0 142.5L136.0 130.8L133.7 118.9M147.3 190.1L147.9 180.1L147.2 169.3L146.0 158.1L144.3 146.6L142.3 134.9L139.9 123.0M153.6 194.3L154.2 184.3L153.5 173.4L152.2 162.2L150.5 150.7L148.5 139.0L146.2 127.1M159.8 198.4L160.4 188.4L159.7 177.6L158.5 166.4L156.8 154.9L154.8 143.2L152.5 131.3M166.1 202.5L166.7 192.5L166.0 181.7L164.7 170.5L163.0 159.0L161.0 147.3L158.7 135.4M47.3 124.3L38.3 128.8L28.1 132.4L17.3 135.7L6.1 138.7L-5.4 141.4L-17.3 144.0M53.5 128.4L44.6 132.9L34.4 136.5L23.6 139.8L12.4 142.8L0.8 145.6L-11.0 148.1M59.8 132.5L50.8 137.0L40.6 140.6L29.8 143.9L18.6 146.9L7.1 149.7L-4.8 152.3M66.0 136.6L57.1 141.1L46.9 144.8L36.1 148.0L24.9 151.0L13.3 153.8L1.5 156.4M72.3 140.7L63.3 145.2L53.1 148.9L42.3 152.1L31.1 155.1L19.6 157.9L7.7 160.5M78.6 144.9L69.6 149.3L59.4 153.0L48.6 156.3L37.4 159.3L25.8 162.0L14.0 164.6M84.8 149.0L75.9 153.5L65.6 157.1L54.8 160.4L43.6 163.4L32.1 166.1L20.2 168.7M91.1 153.1L82.1 157.6L71.9 161.2L61.1 164.5L49.9 167.5L38.3 170.3L26.5 172.8M97.3 157.2L88.4 161.7L78.2 165.3L67.4 168.6L56.1 171.6L44.6 174.4L32.7 177.0M103.6 161.3L94.6 165.8L84.4 169.5L73.6 172.7L62.4 175.7L50.8 178.5L39.0 181.1M109.8 165.4L100.9 169.9L90.7 173.6L79.9 176.8L68.6 179.8L57.1 182.6L45.2 185.2M116.1 169.6L107.1 174.0L96.9 177.7L86.1 181.0L74.9 184.0L63.3 186.7L51.5 189.3M122.3 173.7L113.4 178.2L103.2 181.8L92.4 185.1L81.1 188.1L69.6 190.8L57.7 193.4M128.6 177.8L119.6 182.3L109.4 185.9L98.6 189.2L87.4 192.2L75.8 195.0L64.0 197.5M134.8 181.9L125.9 186.4L115.7 190.0L104.9 193.3L93.6 196.3L82.1 199.1L70.3 201.7M141.1 186.0L132.1 190.5L121.9 194.2L111.1 197.4L99.9 200.4L88.3 203.2L76.5 205.8M147.3 190.1L138.4 194.6L128.2 198.3L117.4 201.5L106.2 204.5L94.6 207.3L82.8 209.9M153.6 194.3L144.6 198.7L134.4 202.4L123.6 205.7L112.4 208.7L100.8 211.4L89.0 214.0M159.8 198.4L150.9 202.9L140.7 206.5L129.9 209.8L118.7 212.8L107.1 215.5L95.3 218.1M166.1 202.5L157.1 207.0L146.9 210.6L136.1 213.9L124.9 216.9L113.4 219.7L101.5 222.2" stroke="#e4e4e4" stroke-width="0.7" fill="none"/>
      </g>
      <!-- veins overlay -->
      <g clip-path="url(#leafclip)" fill="none" stroke-linecap="round"><path d="M37 117.500C70 134 105 156 138 184" stroke="#b9efc4" stroke-width="1.200"/><path d="M62 130c-6-8-10-16-10-26M76 138c-6-12-8-24-4-38M90 147c-6-14-6-32 2-46M103 155c-4-14-2-32 8-44M115 164c-2-12 2-26 12-36M126 173c0-10 4-20 12-26M58 128c-8 2-14 8-18 16M72 136c-10 4-18 12-22 22M86 145c-12 6-20 16-24 28M100 154c-12 8-18 18-20 32M113 163c-10 8-14 18-14 28M125 172c-6 6-8 14-8 22" stroke="#a5e2b2" stroke-width="0.700" opacity="0.800"/></g>
      <!-- ladybird -->
      <ellipse cx="99.3" cy="154.3" rx="4.6" ry="6.6" fill="#3c1a0e"/>
      <ellipse cx="99" cy="152.600" rx="4.500" ry="5.600" fill="#b4401c"/>
      <ellipse cx="97.200" cy="150.800" rx="1.300" ry="2.600" fill="#e29070"/>
    </g>
  </g>
</svg>
<!-- back button -->
<div id="btn"></div>
<svg style="left:43px;top:343px" width="11" height="11" viewBox="0 0 11 11"><path d="M9.300 1.700L1.700 9.300M1.500 3.200v6.300h6.300" fill="none" stroke="#dfe9f5" stroke-width="1.400"/></svg>
<!-- nav icons -->
<svg style="left:27px;top:388px" width="16" height="18" viewBox="0 0 16 18"><path d="M7.700 1.600c2 1.300 3.900 1.700 5.700 1.700v5.200c0 3.600-2.500 5.900-5.700 7.500C4.500 14.400 2 12.100 2 8.500V3.300c1.800 0 3.700-.4 5.700-1.700z" fill="none" stroke="#e8ebf3" stroke-width="1.500" stroke-linejoin="round"/><path d="M6.300 6.700a1.500 1.500 0 1 1 2.100 1.400c-.5.300-.7.600-.7 1.100" fill="none" stroke="#e8ebf3" stroke-width="1.200" stroke-linecap="round"/><circle cx="7.700" cy="11.200" r=".85" fill="#e8ebf3"/></svg>
<svg style="left:26px;top:428px" width="18" height="17" viewBox="0 0 18 17"><path d="M8.700 2.600C7.200 1.600 4.800 1.300 2 1.500v9.800c2.800-.2 5.200.1 6.700 1.100 1.500-1 3.900-1.300 6.700-1.100V1.500c-2.800-.2-5.200.1-6.700 1.100zM8.700 2.600v9.800" fill="none" stroke="#e8ebf3" stroke-width="1.500" stroke-linejoin="round"/><path d="M1.200 13.700c3-.1 5.600.3 7.500 1.500 1.900-1.200 4.500-1.600 7.500-1.500" fill="none" stroke="#e8ebf3" stroke-width="1.300"/></svg>
<svg style="left:26px;top:469px" width="18" height="18" viewBox="0 0 18 18"><circle cx="8.500" cy="8.800" r="7" fill="none" stroke="#e8ebf3" stroke-width="1.500"/><circle cx="8.500" cy="7.100" r="2.300" fill="none" stroke="#e8ebf3" stroke-width="1.400"/><path d="M4.100 13.700c.8-1.800 2.500-2.600 4.400-2.600s3.600.8 4.400 2.600" fill="none" stroke="#e8ebf3" stroke-width="1.400"/></svg>
<svg style="left:26px;top:512px" width="18" height="13" viewBox="0 0 18 13"><path d="M6.400 2.300L2.200 6.600l4.200 4.300M10.600 2.300l4.200 4.300-4.200 4.300" fill="none" stroke="#e8ebf3" stroke-width="1.700"/></svg>

<!-- ===== card ===== -->
<div id="card"></div>
<div class="a" style="left:356px;top:183px;width:838px;height:1px;background:#e4e5ea"></div>
<div class="a" style="left:533px;top:180px;width:26px;height:3px;background:#333a70;border-radius:2px 2px 0 0"></div>
<div class="inp" style="top:261px"></div>
<div class="inp" style="top:340px"></div>

<!-- ===== rich text editor ===== -->
<div id="ed"><div id="edtop"></div><div id="edbot"></div></div>
<svg style="left:368px;top:419px" width="533" height="244" viewBox="368 419 533 244">
  <!-- toolbar separators -->
  <g stroke="#bdbdbd" stroke-width="1">
    <path d="M489.500 429.300v13.300M538.500 429.300v13.300M570.500 429.300v13.300M641.500 429.300v13.300M734.500 429.300v13.300M761.500 429.300v13.300M820.500 429.300v13.300"/>
    <path d="M444.500 455.300v13.300M471.500 455.300v13.300M520.500 455.300v13.300M568.500 455.300v13.300M595.500 455.300v13.300M674.500 455.300v13.300M751.500 455.300v13.300"/>
  </g>
  <!-- cut (disabled) -->
  <g stroke="#c9c9c9" fill="none" stroke-width="1.300"><path d="M384.300 429.900l5.400 8.200M390.400 429.900l-5.400 8.200"/><circle cx="384.200" cy="439.300" r="1.500"/><circle cx="390.500" cy="439.300" r="1.500"/></g>
  <!-- copy (disabled) -->
  <g stroke="#cdcdcd" fill="none" stroke-width="1"><path d="M406.800 437h-2.300v-7.200h4.300l2.200 2.200"/><path d="M407.500 432.500h4.200l2.300 2.300v5.700h-6.500z"/></g>
  <!-- paste / paste-text / paste-word -->
  <g><path d="M429.500 440h-2.600v-9.300h2.200M434 430.700h2v2.600" fill="none" stroke="#6a6a6a" stroke-width="1"/><path d="M429.600 430.900c0-1.300 1-1.900 2-1.900s2 .6 2 1.900z" fill="#444"/><rect x="430.800" y="434.500" width="6" height="5.800" fill="#f8f8f8" stroke="#4d4d4d" stroke-width="1.100"/></g>
  <path d="M431.800 436.500h4M431.800 438.500h4" stroke="#4d4d4d" stroke-width="1.200"/>
  <g transform="translate(22.700 0)"><path d="M429.500 440h-2.600v-9.300h2.200M434 430.700h2v2.600" fill="none" stroke="#6a6a6a" stroke-width="1"/><path d="M429.600 430.900c0-1.300 1-1.900 2-1.900s2 .6 2 1.900z" fill="#444"/><rect x="430.800" y="434.500" width="6" height="5.800" fill="#f8f8f8" stroke="#4d4d4d" stroke-width="1.100"/></g><path d="M454.800 436.200h3.600M456.600 436.200v3.600" stroke="#4d4d4d" stroke-width="1.200"/>
  <g transform="translate(45 0)"><path d="M429.500 440h-2.600v-9.300h2.200M434 430.700h2v2.600" fill="none" stroke="#6a6a6a" stroke-width="1"/><path d="M429.600 430.900c0-1.300 1-1.900 2-1.900s2 .6 2 1.900z" fill="#444"/><rect x="430.800" y="434.500" width="6" height="5.800" fill="#f8f8f8" stroke="#4d4d4d" stroke-width="1.100"/></g><path d="M476.500 439.700l1.400-2.300 1.100 1.300 1.200-1.900 1.200 2.900z" fill="#4d4d4d"/>
  <!-- undo / redo -->
  <path d="M497 435.200l5.200-3.900v2.400c3.700.1 6 2 6.300 5.700-1.400-2-3.200-2.700-6.300-2.700v2.500z" fill="#3c3c3c"/>
  <path d="M531 435.200l-5.200-3.900v2.400c-3.700.1-6 2-6.300 5.700 1.400-2 3.200-2.700 6.300-2.700v2.500z" fill="#cbcbcb"/>
  <!-- spell check -->
  <path d="M547.300 438.300l2.300 2.300 5.300-4.500" fill="none" stroke="#333" stroke-width="1.600"/>
  <path d="M560.300 434.900h3.800l-1.900 2.100z" fill="#444"/>
  <!-- link -->
  <g fill="none" stroke="#3d3d3d" stroke-width="1.300"><rect x="578.300" y="432.900" width="5.800" height="4.700" rx="2.300"/><rect x="582.600" y="432.900" width="5.800" height="4.700" rx="2.300"/></g>
  <!-- unlink (disabled) -->
  <g fill="none" stroke="#cfcfcf" stroke-width="1.200"><rect x="601.200" y="432.500" width="5" height="3.900" rx="1.900"/><rect x="605" y="432.500" width="5" height="3.900" rx="1.900"/><path d="M607.800 437.500l3.200 3.200M611 437.500l-3.200 3.200"/></g>
  <!-- anchor flag -->
  <path d="M623.900 429.700v11.300" stroke="#9c9c9c" stroke-width="1.300"/>
  <path d="M624.800 430.400c1.800-1 3.200-.8 4.700-.2s3 .6 4.900-.4v6.200c-1.900 1-3.400 1-4.900.4s-2.900-.8-4.700.2z" fill="#3a3a3a"/>
  <!-- image -->
  <rect x="649.500" y="431.200" width="10" height="8.400" fill="none" stroke="#4a4a4a" stroke-width="1.100"/>
  <path d="M650.500 438.800l2.600-3.400 2 1.800 1.700-1.600 1.900 3.200z" fill="#4a4a4a"/><circle cx="652.200" cy="433.500" r="1" fill="#4a4a4a"/>
  <!-- table -->
  <rect x="671.400" y="430.300" width="11" height="10.300" fill="none" stroke="#4a4a4a" stroke-width="1"/>
  <path d="M671 431h11.800" stroke="#444" stroke-width="2"/><path d="M675.100 432v8.600M678.800 432v8.600M671.400 435.200h11M671.400 438h11" stroke="#4a4a4a" stroke-width="0.900"/>
  <!-- horizontal rule -->
  <path d="M694 430h10.700M694 432.600h10.700M694 438.600h10.700M694 441.200h10.700" stroke="#c3c3c3" stroke-width="1.100"/><path d="M693.700 435.600h11.300" stroke="#4a4a4a" stroke-width="1.600"/>
  <!-- maximize -->
  <g fill="#3c3c3c"><path d="M742.700 429.900h4.200l-1.400 1.400 2.200 2.200-1.400 1.400-2.200-2.200-1.400 1.400zM754.400 429.900v4.200l-1.400-1.400-2.200 2.200-1.400-1.400 2.200-2.200-1.400-1.400zM742.700 441v-4.200l1.400 1.400 2.200-2.200 1.400 1.400-2.200 2.200 1.400 1.400zM754.400 441h-4.200l1.400-1.400-2.200-2.200 1.400-1.400 2.200 2.200 1.400-1.400z"/></g>
  <!-- source -->
  <path d="M770 430.700h5.700l2.700 2.700v7h-8.400z" fill="none" stroke="#777" stroke-width="1"/>
  <circle cx="774.200" cy="436.700" r="1.700" fill="none" stroke="#555" stroke-width="0.900"/><path d="M771.500 436.700h1M776 436.700h1" stroke="#555" stroke-width="0.900"/>
  <!-- strike line through S -->
  <path d="M425.800 462.400h11.800" stroke="#3c3c3c" stroke-width="1.100"/>
  <!-- remove format: underline + small x -->
  <path d="M452.600 466.700h6" stroke="#666" stroke-width="1"/><path d="M459.700 463.500l3.400 3.400M463.100 463.500l-3.400 3.400" stroke="#444" stroke-width="1.100"/>
  <!-- numbered list -->
  <path d="M483.600 459.300h6M483.600 462.400h6M483.600 465.600h6" stroke="#444" stroke-width="1.300"/>
  <path d="M480.300 458.400l1-.5v3.600M480 463.800c.6-.6 1.700-.4 1.700.4s-1.500 1.500-1.700 2.400h1.900" fill="none" stroke="#444" stroke-width="0.800"/>
  <!-- bulleted list -->
  <path d="M505.500 460.100h6.300M505.500 465h6.300" stroke="#444" stroke-width="1.500"/><circle cx="502.500" cy="460.100" r="1.400" fill="#3c3c3c"/><circle cx="502.500" cy="465" r="1.400" fill="#3c3c3c"/>
  <!-- outdent / indent (disabled) -->
  <g stroke="#d4d4d4" stroke-width="1"><path d="M531 458.500h8M533.500 460.700h5.500M533.500 462.900h5.500M533.500 465.100h5.500M531 467.300h8M533 457.500v10.500"/><path d="M553 458.500h8M555.500 460.700h5.500M555.500 462.900h5.500M555.500 465.100h5.500M553 467.300h8M555 457.500v10.500"/></g>
  <path d="M527.600 462.900l2.600-1.800v3.600zM552.600 462.900l-2.600-1.800v3.600z" fill="#d0d0d0"/>
  <!-- block quote -->
  <path d="M576.700 459.200h4.300v3.600c0 2.300-1.400 3.800-3.700 4.200l-.4-1.100c1.200-.4 1.900-1.100 2-2.300h-2.200zM583.200 459.200h4.300v3.600c0 2.300-1.400 3.800-3.700 4.200l-.4-1.100c1.200-.4 1.900-1.100 2-2.300h-2.200z" fill="#333"/>
  <!-- combo arrows -->
  <path d="M662 461.100h4.600l-2.300 2.400zM739.900 461.100h4.600l-2.300 2.400z" fill="#444"/>
  <!-- resize grip -->
  <path d="M897 651v7h-7z" fill="#b9b9b9"/>
</svg>
<div class="t" style="left:142.60px;top:2.45px;font:normal 14px/18px 'Liberation Sans',sans-serif;color:#ffffff;letter-spacing:-0.081px;">menlahtech.teachpupil.com</div>
<div class="t" style="left:311.30px;top:2.45px;font:normal 14px/18px 'Liberation Sans',sans-serif;color:#9aa0a6;letter-spacing:-0.038px;">/Admin/Packages/PackageInformation</div>
<div class="t" style="left:547.90px;top:2.45px;font:normal 14px/18px 'Liberation Sans',sans-serif;color:#9aa0a6;letter-spacing:0.111px;">?uid=</div>
<div class="t" style="left:583.60px;top:2.45px;font:normal 14px/18px 'Liberation Sans',sans-serif;color:#9aa0a6;letter-spacing:-0.658px;">4LaA4LGA4LCA4LOA4LmA4LSA4LWA4LeA4LKA4LiA</div>
<div class="t" style="left:1265.80px;top:2.30px;font:normal 13px/17px 'Liberation Sans',sans-serif;color:#ffffff;letter-spacing:-0.408px;">Incognito</div>
<div class="t" style="left:1091.60px;top:46.45px;font:bold 14px/18px 'Liberation Sans',sans-serif;color:#ffffff;letter-spacing:-0.881px;">EUNICE</div>
<div class="t" style="left:1091.60px;top:64.33px;font:normal 10px/13px 'Liberation Sans',sans-serif;color:#d3d9e8;letter-spacing:-0.048px;">Admin • Learner • Instructor •</div>
<div class="t" style="left:1252.60px;top:57.41px;font:normal 6.9px/9px 'Liberation Sans',sans-serif;color:#c4c4c4;letter-spacing:0.165px;">50 x 50</div>
<div class="t" style="left:1053.20px;top:43.89px;font:bold 8.4px/11px 'Liberation Sans',sans-serif;color:#ffffff;">0</div>
<div class="t" style="left:32.90px;top:224.55px;font:normal 16.6px/22px 'Liberation Sans',sans-serif;color:#ffffff;letter-spacing:1.436px;-webkit-text-stroke:0.35px #ffffff;">Sample_Bundle</div>
<div class="t" style="left:51.40px;top:265.70px;font:bold 10.4px/14px 'Liberation Sans',sans-serif;color:#ffffff;letter-spacing:0.233px;">Created</div>
<div class="t" style="left:93.30px;top:265.70px;font:normal 10.4px/14px 'Liberation Sans',sans-serif;color:#ffffff;letter-spacing:0.019px;">:07/03/2022</div>
<div class="t" style="left:49.20px;top:288.70px;font:bold 10.4px/14px 'Liberation Sans',sans-serif;color:#ffffff;letter-spacing:0.197px;">Modified</div>
<div class="t" style="left:95.50px;top:288.70px;font:normal 10.4px/14px 'Liberation Sans',sans-serif;color:#ffffff;letter-spacing:0.079px;">:07/03/2022</div>
<div class="t" style="left:59.60px;top:343.70px;font:bold 10.4px/14px 'Liberation Sans',sans-serif;color:#ffffff;letter-spacing:-0.088px;">Back to Bundle</div>
<div class="t" style="left:61.60px;top:388.16px;font:normal 13.4px/17px 'Liberation Sans',sans-serif;color:#e8ebf3;letter-spacing:0.190px;">Information</div>
<div class="t" style="left:61.60px;top:429.16px;font:normal 13.4px/17px 'Liberation Sans',sans-serif;color:#e8ebf3;letter-spacing:0.022px;">Bundle Builder</div>
<div class="t" style="left:61.60px;top:470.16px;font:normal 13.4px/17px 'Liberation Sans',sans-serif;color:#e8ebf3;letter-spacing:-0.166px;">Learners</div>
<div class="t" style="left:61.90px;top:510.16px;font:normal 13.4px/17px 'Liberation Sans',sans-serif;color:#e8ebf3;letter-spacing:-0.271px;">Access Code</div>
<div class="t" style="left:356.60px;top:155.00px;font:normal 12.4px/16px 'Liberation Sans',sans-serif;color:#b0b1b6;letter-spacing:0.287px;">Details</div>
<div class="t" style="left:410.90px;top:155.00px;font:normal 12.4px/16px 'Liberation Sans',sans-serif;color:#b0b1b6;letter-spacing:0.503px;">Category</div>
<div class="t" style="left:479.20px;top:155.00px;font:normal 12.4px/16px 'Liberation Sans',sans-serif;color:#b0b1b6;letter-spacing:0.438px;">Pricing</div>
<div class="t" style="left:534.00px;top:155.00px;font:normal 12.4px/16px 'Liberation Sans',sans-serif;color:#303a72;letter-spacing:-0.586px;">SEO</div>
<div class="t" style="left:573.70px;top:155.00px;font:normal 12.4px/16px 'Liberation Sans',sans-serif;color:#b0b1b6;letter-spacing:0.511px;">Advanced</div>
<div class="t" style="left:369.30px;top:196.48px;font:normal 16.8px/22px 'Liberation Sans',sans-serif;color:#1c1c28;letter-spacing:1.502px;-webkit-text-stroke:0.2px #1c1c28;">Marketing</div>
<div class="t" style="left:369.10px;top:234.30px;font:normal 13px/17px 'Liberation Sans',sans-serif;color:#6b7a94;letter-spacing:0.415px;">Bundle Page Url:</div>
<div class="t" style="left:474.40px;top:237.34px;font:normal 10px/13px 'Liberation Sans',sans-serif;color:#f02c3a;">*</div>
<div class="t" style="left:369.10px;top:313.30px;font:normal 13px/17px 'Liberation Sans',sans-serif;color:#6b7a94;letter-spacing:0.410px;">Bundle Page Title:</div>
<div class="t" style="left:482.50px;top:316.33px;font:normal 10px/13px 'Liberation Sans',sans-serif;color:#f02c3a;">*</div>
<div class="t" style="left:369.10px;top:392.30px;font:normal 13px/17px 'Liberation Sans',sans-serif;color:#6b7a94;letter-spacing:0.552px;">Bundle Page Description:</div>
<div class="t" style="left:529.00px;top:395.33px;font:normal 10px/13px 'Liberation Sans',sans-serif;color:#f02c3a;">*</div>
<div class="t" style="left:369.10px;top:666.30px;font:normal 13px/17px 'Liberation Sans',sans-serif;color:#6b7a94;letter-spacing:0.468px;">Bundle Keywords:</div>
<div class="t" style="left:481.80px;top:669.34px;font:normal 10px/13px 'Liberation Sans',sans-serif;color:#f02c3a;">*</div>
<div class="t" style="left:383.20px;top:271.82px;font:normal 11.5px/15px 'Liberation Sans',sans-serif;color:#4f5563;letter-spacing:0.262px;">Page_URL</div>
<div class="t" style="left:383.20px;top:350.82px;font:normal 11.5px/15px 'Liberation Sans',sans-serif;color:#4f5563;letter-spacing:0.393px;">Page_Title</div>
<div class="t" style="left:385.30px;top:497.42px;font:normal 9.75px/13px 'Liberation Sans',sans-serif;color:#333333;letter-spacing:0.303px;">Bundle Page Description</div>
<div class="t" style="left:379.10px;top:646.89px;font:bold 8.4px/11px 'Liberation Sans',sans-serif;color:#333333;letter-spacing:0.095px;">body</div>
<div class="t" style="left:408.40px;top:646.89px;font:bold 8.4px/11px 'Liberation Sans',sans-serif;color:#333333;">p</div>
<div class="t" style="left:783.80px;top:430.11px;font:normal 9.2px/12px 'Liberation Sans',sans-serif;color:#333333;letter-spacing:0.215px;">Source</div>
<div class="t" style="left:606.00px;top:456.11px;font:normal 9.2px/12px 'Liberation Sans',sans-serif;color:#333333;letter-spacing:0.194px;">Styles</div>
<div class="t" style="left:683.90px;top:456.11px;font:normal 9.2px/12px 'Liberation Sans',sans-serif;color:#333333;letter-spacing:0.138px;">Normal</div>
<div class="t" style="left:544.90px;top:429.51px;font:bold 6.6px/9px 'Liberation Sans',sans-serif;color:#333333;letter-spacing:-1.498px;">ABC</div>
<div class="t" style="left:716.20px;top:426.07px;font:normal 15.5px/20px 'Liberation Serif',serif;color:#444444;">Ω</div>
<div class="t" style="left:382.40px;top:453.45px;font:bold 14px/18px 'Liberation Sans',sans-serif;color:#3c3c3c;">B</div>
<div class="t" style="left:406.00px;top:454.58px;font:bold 14px/18px 'Liberation Serif',serif;color:#3c3c3c;font-style:italic;">I</div>
<div class="t" style="left:427.00px;top:453.45px;font:bold 14px/18px 'Liberation Sans',sans-serif;color:#3c3c3c;">S</div>
<div class="t" style="left:452.80px;top:453.41px;font:bold 13px/17px 'Liberation Serif',serif;color:#555555;font-style:italic;">T</div>
<div class="t" style="left:761.60px;top:453.45px;font:bold 14px/18px 'Liberation Sans',sans-serif;color:#4c4c4c;">?</div>

</body>
</html>
